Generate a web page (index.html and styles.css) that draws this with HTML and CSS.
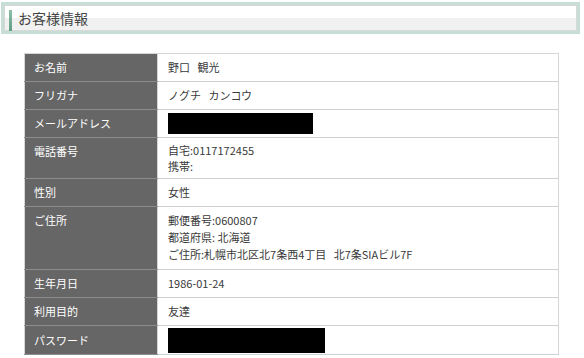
FILE: index.html
```html
<!DOCTYPE html>
<html lang="ja">
<head>
<meta charset="utf-8">
<title>お客様情報</title>
<link rel="stylesheet" href="styles.css">
</head>
<body>
<div class="page">
  <h2 class="section-title"><span class="section-title__inner">お客様情報</span></h2>
  <table class="info">
    <tr><th>お名前</th><td>野口&nbsp;&nbsp;&nbsp;観光</td></tr>
    <tr><th>フリガナ</th><td>ノグチ&nbsp;&nbsp;&nbsp;カンコウ</td></tr>
    <tr><th>メールアドレス</th><td><span class="masked masked--mail"></span></td></tr>
    <tr class="multi multi--phone"><th>電話番号</th><td>自宅:0117172455<br>携帯:</td></tr>
    <tr><th>性別</th><td>女性</td></tr>
    <tr class="multi multi--address"><th>ご住所</th><td>郵便番号:0600807<br>都道府県: 北海道<br>ご住所:札幌市北区北7条西4丁目&nbsp;&nbsp;&nbsp;北7条SIAビル7F</td></tr>
    <tr><th>生年月日</th><td>1986-01-24</td></tr>
    <tr><th>利用目的</th><td>友達</td></tr>
    <tr><th>パスワード</th><td><span class="masked masked--pass"></span></td></tr>
  </table>
</div>
</body>
</html>
```
FILE: styles.css
```css
html, body {
  margin: 0;
  padding: 0;
  background: #fff;
}

body {
  font-family: "Noto Sans CJK JP", "Noto Sans", sans-serif;
  color: #333;
}

.page {
  width: 584px;
  padding-top: 2px;
}

.section-title {
  margin: 0 4px 0 1px;
  border: 3px solid #c6ded6;
  font-weight: normal;
}

.section-title__inner {
  display: block;
  border: 1px solid #d8d8d8;
  background: linear-gradient(to bottom, #ffffff 0, #ffffff 50%, #f1f1f1 50%, #f1f1f1 100%);
  height: 24px;
  padding: 0 0 0 13px;
  position: relative;
  font-size: 14px;
  line-height: 24px;
  color: #444;
}

.section-title__inner::before {
  content: "";
  position: absolute;
  left: 4px;
  top: 4px;
  width: 3px;
  height: 21px;
  background: linear-gradient(to bottom, #8cbfa8, #5e9e82);
}

.info {
  margin: 19px 0 0 24px;
  width: 535px;
  border-collapse: collapse;
  border: 1px solid #d6d6d6;
  font-size: 11px;
  line-height: 17px;
}

.info th,
.info td {
  padding: 5px 10px;
  text-align: left;
  vertical-align: middle;
  font-weight: normal;
}

.info th {
  width: 113px;
  background: #666;
  color: #fff;
  padding-left: 9px;
  border-bottom: 1px solid #8c8c8c;
  border-right: 1px solid #d6d6d6;
}

.info td {
  background: #fff;
  color: #3a3a3a;
  border-bottom: 1px solid #d0d0d0;
}

.info tr.multi th {
  vertical-align: top;
}

.info tr.multi td {
  line-height: 16px;
}

.info tr.multi--phone th,
.info tr.multi--phone td {
  padding-top: 4px;
  padding-bottom: 4px;
}

.info tr.multi--phone th {
  padding-top: 5px;
}

.info tr.multi--address th,
.info tr.multi--address td {
  padding-top: 5px;
  padding-bottom: 6px;
}

.info tr.multi--address td {
  line-height: 17px;
}

.masked {
  display: block;
  background: #000;
}

.masked--mail {
  width: 145px;
  height: 21px;
  margin: -2px 0 -2px 0;
}

.masked--pass {
  width: 157px;
  height: 25px;
  margin: -3px 0 -4px 0;
}
```
